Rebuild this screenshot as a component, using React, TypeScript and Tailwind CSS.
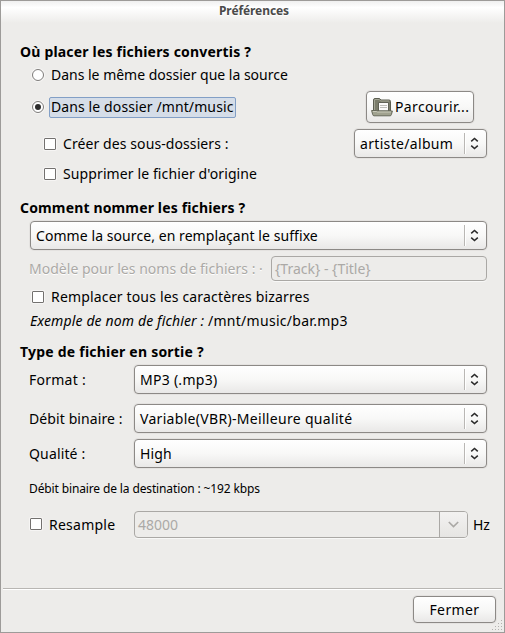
import type { ReactNode } from "react";

function Heading({ className, children }: { className: string; children: ReactNode }) {
  return <h2 className={`ml-[19px] h-5 font-bold ${className}`}>{children}</h2>;
}

function CheckBox({ className = "" }: { className?: string }) {
  return <span className={`size-3 shrink-0 rounded-[1px] border border-[#73716f] bg-white shadow-[0_0_0_1px_#f6f5f4] ${className}`} />;
}

function Radio({ checked = false }: { checked?: boolean }) {
  return (
    <span className="flex size-3 shrink-0 items-center justify-center rounded-full border border-[#7d7b79] bg-white shadow-[0_0_0_1px_#f6f5f4]">
      {checked && <span className="size-1.5 rounded-full bg-[#2d2d2d]" />}
    </span>
  );
}

function Combo({ className, text, children }: { className: string; text: string; children: ReactNode }) {
  return (
    <div
      className={`flex h-[29px] shrink-0 items-center rounded-[4px] border border-[#8c8986] bg-linear-to-b from-white via-[#f8f8f7] to-[#e9e8e7] pl-[5px] shadow-[0_0_0_1px_#e4e2e0] ${className}`}
    >
      <span className={`flex-1 ${text}`}>{children}</span>
      <span className="h-[21px] w-0.5 border-l border-[#b9b7b4] border-r border-r-white" />
      <svg className="mr-[7px] ml-[4px] h-[13px] w-[9px]" viewBox="0 0 9 13" fill="none" stroke="#2b2b2b" strokeWidth="1.5">
        <path d="M1.2 4.4 4.5 1.4 7.8 4.4M1.2 8.6 4.5 11.6 7.8 8.6" />
      </svg>
    </div>
  );
}

function FolderIcon() {
  return (
    <svg className="h-5 w-[22px] shrink-0" viewBox="0 0 22 20">
      <path d="M2.5 14V3q0-1.5 1.500-1.500h4.500l1.500 1.500h8q1.500 0 1.500 1.500V14z" fill="#7b7d6b" stroke="#5c5e51" />
      <path d="M3.5 13V3q0-.5.5-.5h4.200L9.700 4h8.300" fill="none" stroke="#a3a594" />
      <path d="M7.500 5.500h10V14h-10z" fill="#fafaf8" stroke="#5f6154" />
      <path d="M9 8.500h7M9 10.500h7" stroke="#bdbdb8" />
      <path d="M.6 13.500h5l1 .5h14.800l-1 3.600q-.3 1.200-1.300 1.200H3q-1 0-1.300-1.200z" fill="#a0a28f" stroke="#66685a" />
      <path d="M1.800 14.500h3.600l1 .5h13.600" fill="none" stroke="#c9cabb" />
    </svg>
  );
}

export default function App() {
  return (
    <div className="flex h-[633px] w-[505px] flex-col overflow-hidden border border-[#9d9b99] bg-[#edecea] font-['Noto_Sans','Open_Sans',sans-serif] text-[14px] leading-5 whitespace-pre text-black">
      <header className="flex h-[22px] items-center justify-center bg-linear-to-b from-[#f0f0f0] via-white via-30% to-[#edecea] pl-[3px] text-[12px] leading-[20px] font-bold tracking-[-0.09px] text-[#4a4a4a] [text-shadow:0_1px_0_#fff]">
        <span className="-mt-0.5">Préférences</span>
      </header>

      <section className="mt-[19px] mr-[17px]">
        <Heading className="tracking-[0.19px]">Où placer les fichiers convertis ?</Heading>
        <div className="mt-[3px] ml-[31px] flex h-5 items-center gap-[7px]">
          <Radio />
          <span className="tracking-[-0.01px]">Dans le même dossier que la source</span>
        </div>
        <div className="mt-1.5 mr-[13px] ml-[31px] flex h-8 items-center">
          <Radio checked />
          <span className="ml-[5px] h-[21px] w-[187px] rounded-[2px] border border-[#829fc6] bg-[#d5dde8] pl-px leading-[18px] tracking-[0.11px]">
            Dans le dossier /mnt/music
          </span>
          <button className="ml-auto flex h-8 w-[108px] items-center rounded-[4px] border border-[#8c8986] bg-linear-to-b from-white via-[#f8f8f7] to-[#e9e8e7] pl-1 tracking-[0.37px] shadow-[0_0_0_1px_#e4e2e0]">
            <FolderIcon />
            <span className="ml-0.5">Parcourir...</span>
          </button>
        </div>
        <div className="mt-1.5 ml-[43px] flex items-center">
          <CheckBox />
          <span className="ml-[7px] flex-1 tracking-[0.09px]">Créer des sous-dossiers :</span>
          <Combo className="w-[133px]" text="tracking-[0.33px]">artiste/album</Combo>
        </div>
        <div className="mt-1.5 ml-[43px] flex h-5 items-center gap-[7px]">
          <CheckBox />
          <span className="tracking-[0.11px]">Supprimer le fichier d'origine</span>
        </div>
      </section>

      <section className="mt-3.5 mr-[17px]">
        <Heading className="tracking-[0.15px]">Comment nommer les fichiers ?</Heading>
        <Combo className="mt-[3px] ml-[29px]" text="tracking-[0.07px]">Comme la source, en remplaçant le suffixe</Combo>
        <div className="mt-1.5 ml-7 flex items-center text-[#aba9a6]">
          <span className="w-[242px] tracking-[0.02px] [text-shadow:0_1px_0_#fff]">Modèle pour les noms de fichiers : ·</span>
          <div className="flex h-[25px] flex-1 items-center rounded-[4px] border border-[#aaa8a5] pl-[3px] shadow-[0_1px_0_#f8f8f7]">
            {"{Track} - {Title}"}
          </div>
        </div>
        <div className="mt-1.5 ml-[31px] flex h-5 items-center gap-[7px]">
          <CheckBox />
          <span className="tracking-[0.17px]">Remplacer tous les caractères bizarres</span>
        </div>
        <div className="mt-1 ml-[29px] flex h-5">
          <em className="w-[178px] tracking-[0.14px]">Exemple de nom de fichier :</em>
          <span className="tracking-[0.28px]">/mnt/music/bar.mp3</span>
        </div>
      </section>

      <section className="mt-[11px] mr-[17px]">
        <Heading className="tracking-[0.22px]">Type de fichier en sortie ?</Heading>
        <div className="mt-[3px] ml-7 flex items-center">
          <span className="w-[105px] tracking-[0.25px]">Format :</span>
          <Combo className="flex-1" text="tracking-[0.27px]">MP3 (.mp3)</Combo>
        </div>
        <div className="mt-2.5 ml-7 flex items-center">
          <span className="w-[105px] tracking-[0.1px]">Débit binaire :</span>
          <Combo className="flex-1" text="tracking-[0.31px]">Variable(VBR)-Meilleure qualité</Combo>
        </div>
        <div className="mt-1.5 ml-7 flex items-center">
          <span className="w-[105px] tracking-[0.15px]">Qualité :</span>
          <Combo className="flex-1" text="tracking-[0.1px]">High</Combo>
        </div>
        <div className="mt-[11px] ml-7 h-5 text-[12px] tracking-[-0.13px]">Débit binaire de la destination : ~192 kbps</div>
        <div className="mt-3 ml-[29px] flex items-center">
          <CheckBox className="-mt-0.5" />
          <span className="ml-[7px] w-[85px] shrink-0 tracking-[0.25px]">Resample</span>
          <div className="flex h-[27px] w-[334px] shrink-0 rounded-[4px] border border-[#aaa8a5] leading-[25px] text-[#aba9a6] shadow-[0_1px_0_#f8f8f7]">
            <span className="flex-1 pl-[3px]">48000</span>
            <span className="flex w-7 items-center justify-center rounded-r-[3px] border-l border-[#aaa8a5] bg-linear-to-b from-[#f3f2f1] to-[#e6e5e3]">
              <svg className="h-[7px] w-[11px]" viewBox="0 0 11 7" fill="none" stroke="#aaa8a5" strokeWidth="1.6">
                <path d="m.8 1 4.700 4.600L10.200 1" />
              </svg>
            </span>
          </div>
          <span className="-mr-1 ml-[5px]">Hz</span>
        </div>
      </section>

      <footer className="relative mx-0.5 mt-[50px] flex flex-1 items-start justify-end border-t border-[#b8b6b3] shadow-[inset_0_1px_0_#fff]">
        <button className="mt-[7px] mr-1.5 h-[27px] w-[83px] rounded-[4px] border border-[#8c8986] bg-linear-to-b from-white via-[#f8f8f7] to-[#e9e8e7] leading-[25px] tracking-[0.4px] shadow-[0_0_0_1px_#e4e2e0]">
          Fermer
        </button>
        <svg className="absolute -right-px bottom-px size-3" viewBox="0 0 12 12" fill="#b3b1ae">
          <path d="M10 1h1v1h-1zM7 4h1v1H7zM10 4h1v1h-1zM4 7h1v1H4zM7 7h1v1H7zM10 7h1v1h-1zM1 10h1v1H1zM4 10h1v1H4zM7 10h1v1H7zM10 10h1v1h-1z" />
        </svg>
      </footer>
    </div>
  );
}
